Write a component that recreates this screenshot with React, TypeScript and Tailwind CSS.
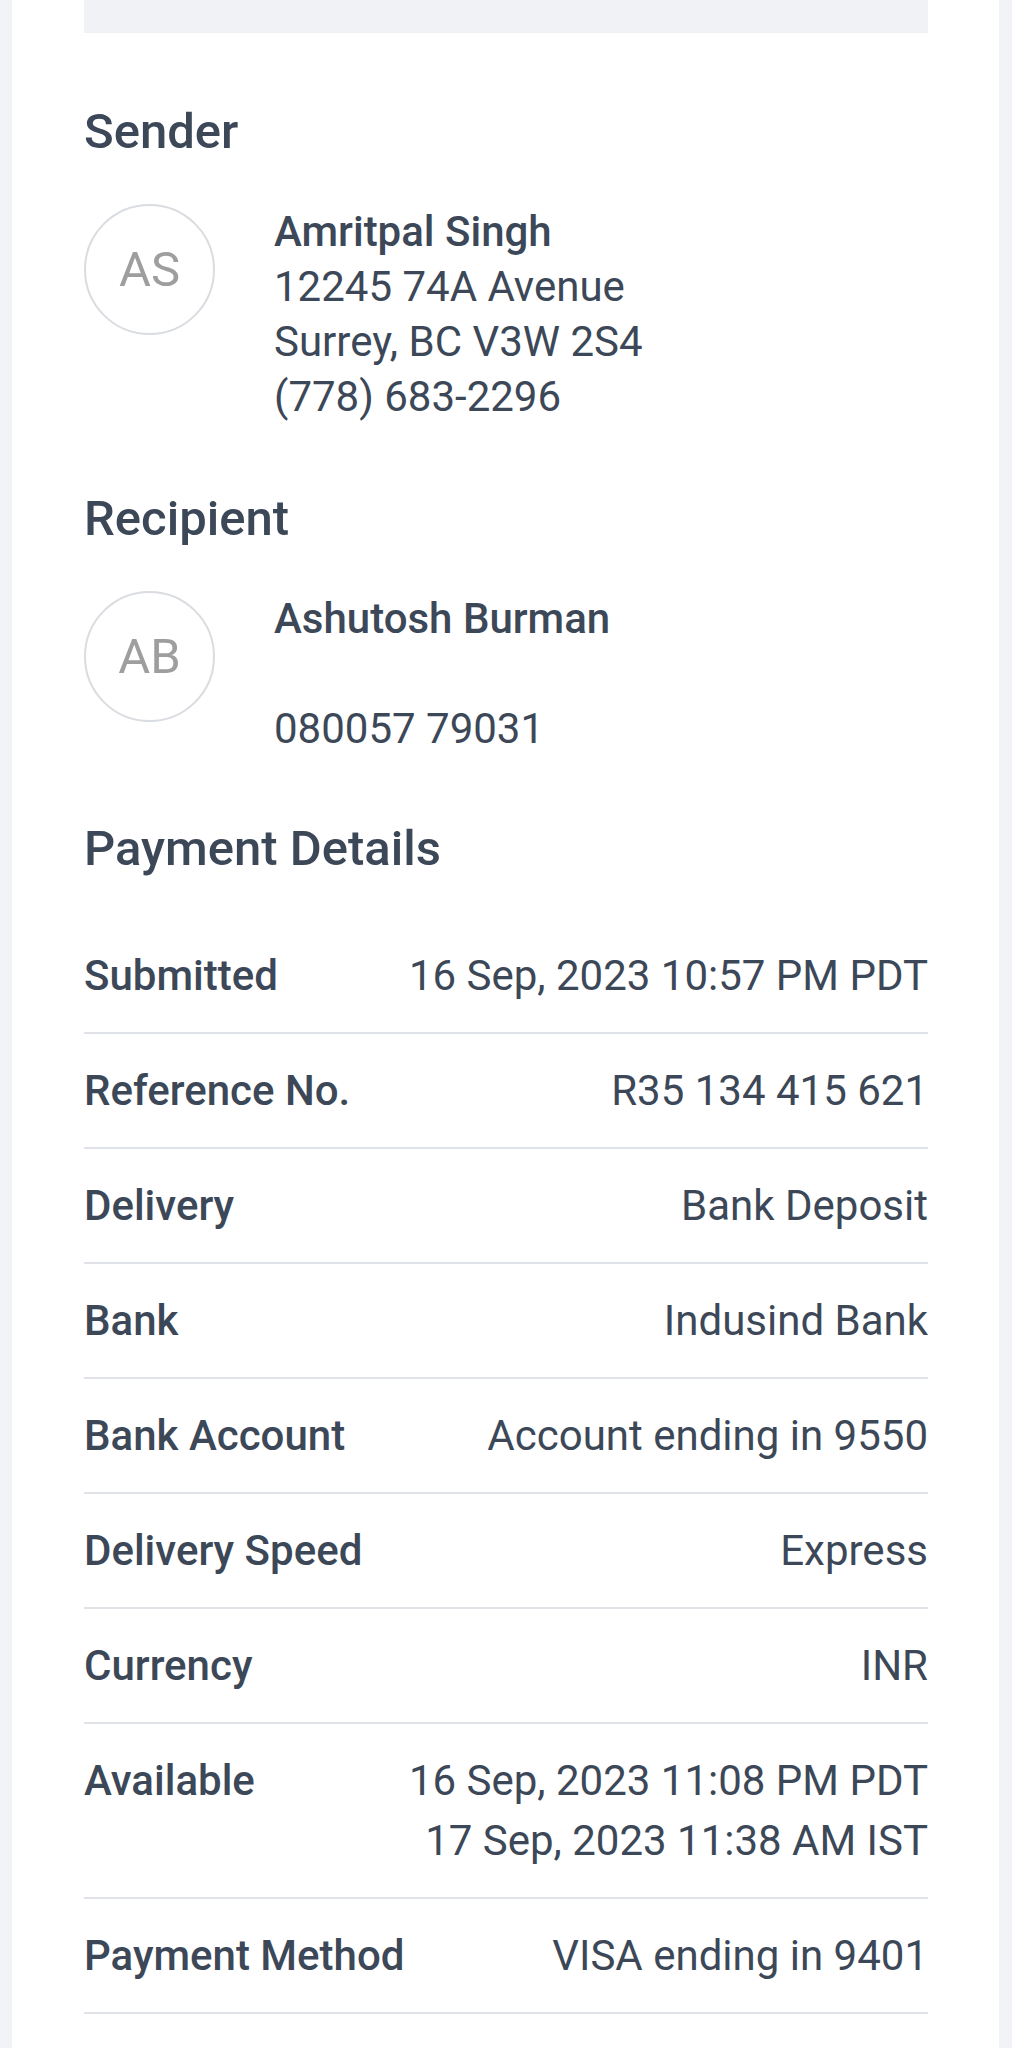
import React from "react";

const font = { fontFamily: 'Roboto, "Liberation Sans", Arial, sans-serif' };

function Avatar({ initials }: { initials: string }) {
  return (
    <div className="flex h-[131px] w-[131px] shrink-0 items-center justify-center rounded-full border-2 border-[#d9dce0] text-[49px] font-normal text-[#9e9e9e]">
      {initials}
    </div>
  );
}

function Party({
  title,
  initials,
  lines,
}: {
  title: string;
  initials: string;
  lines: string[];
}) {
  return (
    <section>
      <h2 className="text-[49px] font-medium leading-[56px] text-[#3c4858]">{title}</h2>
      <div className="mt-[44px] flex gap-[59px]">
        <Avatar initials={initials} />
        <div className="text-[42px] leading-[55px] text-[#3c4858]">
          <div className="font-medium">{lines[0]}</div>
          {lines.slice(1).map((l, i) => (
            <div key={i} className="h-[55px]">
              {l}
            </div>
          ))}
        </div>
      </div>
    </section>
  );
}

const rows: { label: string; value: string[] }[] = [
  { label: "Submitted", value: ["16 Sep, 2023 10:57 PM PDT"] },
  { label: "Reference No.", value: ["R35 134 415 621"] },
  { label: "Delivery", value: ["Bank Deposit"] },
  { label: "Bank", value: ["Indusind Bank"] },
  { label: "Bank Account", value: ["Account ending in 9550"] },
  { label: "Delivery Speed", value: ["Express"] },
  { label: "Currency", value: ["INR"] },
  { label: "Available", value: ["16 Sep, 2023 11:08 PM PDT", "17 Sep, 2023 11:38 AM IST"] },
  { label: "Payment Method", value: ["VISA ending in 9401"] },
];

export default function App() {
  return (
    <div className="min-h-[2048px] bg-[#f1f3f6]" style={font}>
      <div className="ml-[12px] mr-[13px] min-h-[2048px] bg-white px-[72px] pr-[71px]">
        <div className="h-[33px] bg-[#f0f2f5]" />
        <div className="mt-[71px]">
          <Party
            title="Sender"
            initials="AS"
            lines={["Amritpal Singh", "12245 74A Avenue", "Surrey, BC V3W 2S4", "(778) 683-2296"]}
          />
        </div>
        <div className="mt-[67px]">
          <Party title="Recipient" initials="AB" lines={["Ashutosh Burman", "", "080057 79031"]} />
        </div>
        <section className="mt-[65px]">
          <h2 className="text-[49px] font-medium leading-[56px] text-[#3c4858]">Payment Details</h2>
          <div className="mt-[42px]">
            {rows.map((r) => (
              <div
                key={r.label}
                className="flex items-start justify-between border-b-2 border-[#dfe2e6] pb-[26px] pt-[27px] text-[42px] leading-[60px] text-[#3c4858]"
              >
                <div className="font-medium">{r.label}</div>
                <div className="text-right">
                  {r.value.map((v) => (
                    <div key={v}>{v}</div>
                  ))}
                </div>
              </div>
            ))}
          </div>
        </section>
      </div>
    </div>
  );
}
